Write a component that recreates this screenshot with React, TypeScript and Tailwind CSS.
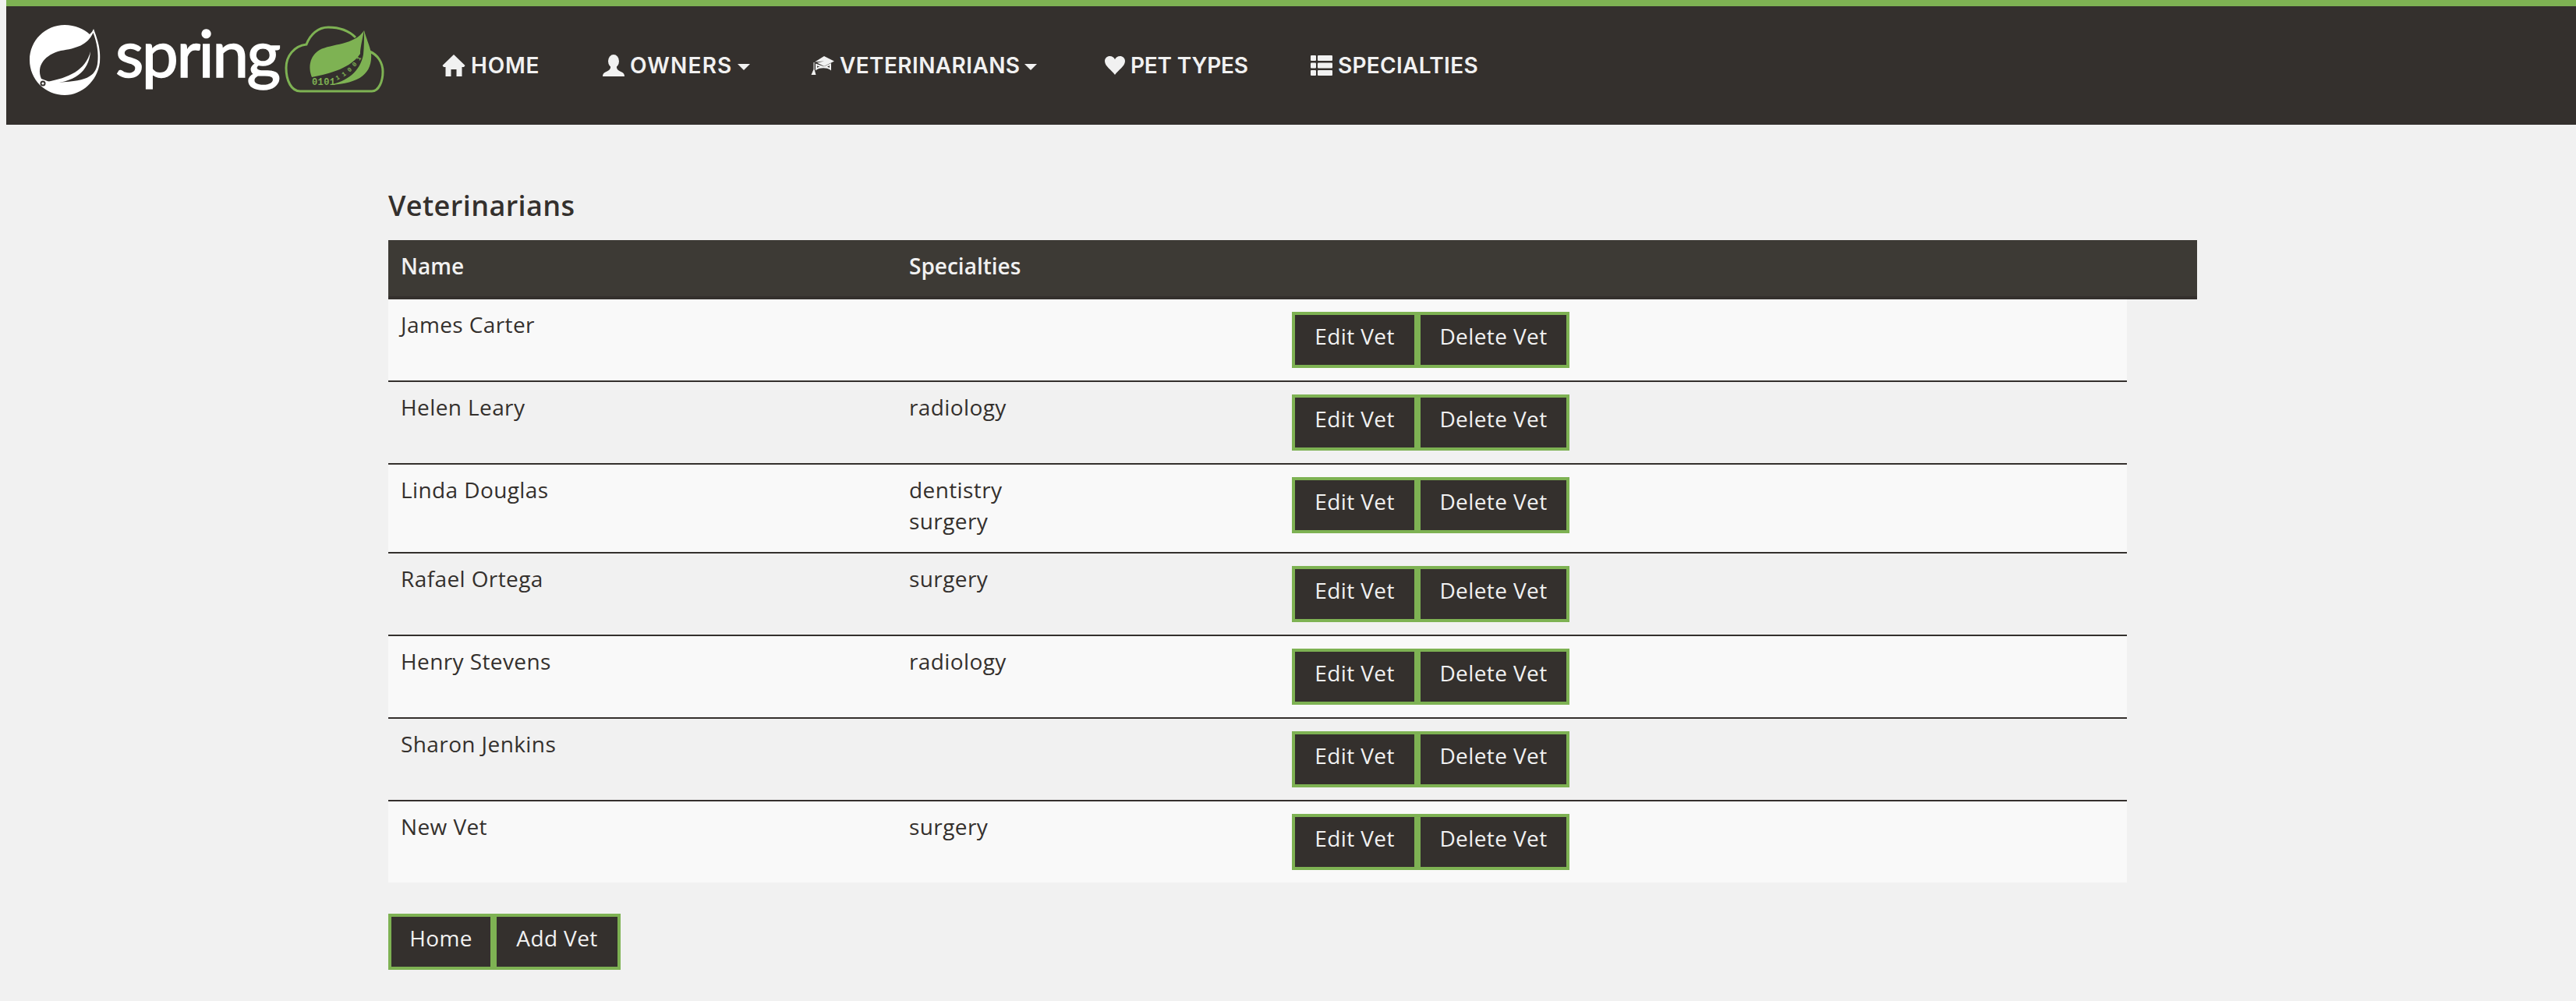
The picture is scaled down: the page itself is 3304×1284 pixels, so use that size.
const BODY = "font-['Open_Sans','Liberation_Sans',sans-serif]";

function HomeIcon() {
  return (
    <svg width="30" height="30" viewBox="0 0 30 30" fill="#f1f1f1">
      <path d="M15 1 L29.5 15 L28 17 H25.5 V29 H18.5 V20 H11.5 V29 H4.5 V17 H2 L0.5 15Z" />
    </svg>
  );
}
function UserIcon() {
  return (
    <svg width="28" height="28" viewBox="0 0 28 28" fill="#f1f1f1">
      <ellipse cx="14" cy="8.5" rx="7" ry="8.5" />
      <path d="M10 15 C10.5 19 8 20.5 3.5 22.5 C1 23.6 0 25.5 0 28 H28 C28 25.5 27 23.6 24.5 22.5 C20 20.5 17.5 19 18 15 Z" />
    </svg>
  );
}
function CapIcon() {
  return (
    <svg width="30" height="24" viewBox="0 0 30 24" fill="#f1f1f1">
      <path d="M17 0 L30 6.5 L17 13 L8 8.5 L17 6.5 L5 7.5Z" />
      <path d="M7 11 V16.5 C11 13.5 21 13.5 25 16.5 V10.5 L17 14.5 Z" fill="none" stroke="#f1f1f1" strokeWidth="2" />
      <path d="M3.5 8 V17 L0.5 24 H6.5 L4.6 17 V8Z" />
    </svg>
  );
}
function HeartIcon() {
  return (
    <svg width="26" height="24" viewBox="0 0 26 24" fill="#f1f1f1">
      <path d="M13 24 C9 18 0 13 0 6.5 C0 2.5 3 0 6.5 0 C9.5 0 12 1.8 13 4.2 C14 1.8 16.5 0 19.5 0 C23 0 26 2.5 26 6.5 C26 13 17 18 13 24Z" />
    </svg>
  );
}
function ListIcon() {
  return (
    <svg width="28" height="26" viewBox="0 0 28 26" fill="#f1f1f1">
      <rect x="0" y="0" width="7" height="7" rx="1" />
      <rect x="9" y="0" width="19" height="7" rx="1" />
      <rect x="0" y="9.5" width="7" height="7" rx="1" />
      <rect x="9" y="9.5" width="19" height="7" rx="1" />
      <rect x="0" y="19" width="7" height="7" rx="1" />
      <rect x="9" y="19" width="19" height="7" rx="1" />
    </svg>
  );
}

function SpringLeaf() {
  return (
    <svg width="92" height="92" viewBox="38 32 92 92" className="shrink-0">
      <path d="M120 37 C123 45 130 62 128 80 C125 104 105 122 83 122 C58 122 38 102 38 77 C38 52 58 32 83 32 C96 32 108 37 115 44 C117 42 119 40 120 37Z" fill="#fff" />
      <path d="M119.5 42 C124 54 127 68 125 82 C122 98 112 105 66 106 L53 101 C46 84 58 70 78 65 C98 62 112 58 119.5 42Z" fill="#34302d" />
      <path d="M60 105 C88 100 110 90 116 66 C114 92 96 106 60 108Z" fill="#fff" />
      <circle cx="55" cy="107" r="3.5" fill="#34302d" />
      <circle cx="55" cy="107" r="1.6" fill="#fff" />
    </svg>
  );
}

function CloudLeaf() {
  return (
    <svg width="128" height="88" viewBox="365 30 128 88" className="shrink-0">
      <path
        d="M385 115 H477 C486 115 491 102 491 90 C491 78 484 68 474 64 M456 46 C446 36 433 33 421 33 C408 33 398 42 393 55 C377 57 367 70 367 85 C367 102 374 115 385 115"
        fill="none"
        stroke="#7eb253"
        strokeWidth="3"
      />
      <path d="M467 37 C464 52 462 60 462 67 C450 85 425 92 400 97 C395 84 397 70 410 62 C425 54 455 56 467 37Z" fill="#7eb253" />
      <path d="M467 37 C470 48 474 56 476 66 C478 92 462 105 423 107 C445 102 462 90 466 68 C467 58 467 47 467 37Z" fill="#7eb253" />
      <path id="leafBand" d="M432 101 C445 95 456 85 463 73" fill="none" />
      <text fill="#7eb253" fontSize="8" fontWeight="700" fontFamily="Liberation Mono, monospace">
        <textPath href="#leafBand">1 1 0 0 1</textPath>
      </text>
      <text x="400" y="107" fill="#7eb253" fontSize="12" fontWeight="700" fontFamily="Liberation Mono, monospace" textLength="30">0 1 0 1</text>
    </svg>
  );
}

function NavItem({
  icon,
  label,
  caret,
  width,
  tracking,
}: {
  icon: React.ReactNode;
  label: string;
  caret?: boolean;
  width: string;
  tracking: string;
}) {
  return (
    <a className={`flex items-center gap-[7px] text-[28px] font-semibold text-[#f1f1f1] uppercase ${width}`}>
      <span className="flex items-center">{icon}</span>
      <span className={tracking}>{label}</span>
      {caret && (
        <span className="ml-[-1px] mt-[3px] h-0 w-0 border-x-8 border-t-8 border-x-transparent border-t-[#f1f1f1]" />
      )}
    </a>
  );
}

function Btn({ label, width }: { label: string; width: string }) {
  return (
    <button
      className={`flex h-[72px] items-center justify-center border-4 border-[#7eb253] bg-[#34302d] pb-[10px] text-[28px] tracking-[0.4px] text-[#f1f1f1] ${width}`}
    >
      {label}
    </button>
  );
}

const vets: { name: string; spec: string[] }[] = [
  { name: "James Carter", spec: [] },
  { name: "Helen Leary", spec: ["radiology"] },
  { name: "Linda Douglas", spec: ["dentistry", "surgery"] },
  { name: "Rafael Ortega", spec: ["surgery"] },
  { name: "Henry Stevens", spec: ["radiology"] },
  { name: "Sharon Jenkins", spec: [] },
  { name: "New Vet", spec: ["surgery"] },
];

export default function App() {
  return (
    <div className={`min-h-[1284px] bg-[#f1f1f1] pl-2 text-[#34302d] ${BODY}`}>
      <nav className="flex h-[160px] items-center border-t-8 border-[#7eb253] bg-[#34302d] font-['Inter',sans-serif]">
        <div className="ml-[30px] flex h-[152px] items-start pt-6">
          <SpringLeaf />
          <span className="ml-[18px] mt-[-15px] w-[218px] shrink-0 font-['Lato',sans-serif] text-[84px] leading-[100px] font-normal tracking-[-2.5px] text-white [-webkit-text-stroke:1.5px_white]">
            spring
          </span>
          <div className="ml-[-1px]">
            <CloudLeaf />
          </div>
        </div>
        <div className="ml-[74px] flex items-center">
          <NavItem width="w-[206px]" tracking="tracking-[0.8px]" icon={<HomeIcon />} label="Home" />
          <NavItem width="w-[267px]" tracking="tracking-[1.2px]" icon={<UserIcon />} label="Owners" caret />
          <NavItem width="w-[377px]" tracking="tracking-[0.4px]" icon={<CapIcon />} label="Veterinarians" caret />
          <NavItem width="w-[264px]" tracking="tracking-[-0.2px]" icon={<HeartIcon />} label="Pet Types" />
          <NavItem width="w-[240px]" tracking="tracking-[0.3px]" icon={<ListIcon />} label="Specialties" />
        </div>
      </nav>

      <main className="ml-[490px] w-[2320px] pt-[84px]">
        <h2 className="h-[64px] text-[36px] leading-[40px] font-semibold tracking-[0.4px]">Veterinarians</h2>
        <div className="grid h-[76px] grid-cols-[652px_491px_1fr] border-b-4 border-[#34302d] bg-[#3d3a35] text-[28px] leading-[40px] font-semibold text-[#f1f1f1]">
          <div className="px-4 pt-[13px]">Name</div>
          <div className="px-4 pt-[13px]">Specialties</div>
          <div />
        </div>
        <div className="mb-10 w-[2230px] text-[28px] leading-[40px] tracking-[0.4px]">
          {vets.map((v, i) => (
            <div
              key={v.name}
              className={`grid grid-cols-[652px_491px_1fr] ${i % 2 === 0 ? "bg-[#f9f9f9]" : "bg-[#f1f1f1]"} ${
                i < vets.length - 1 ? "border-b-2 border-[#34302d]" : ""
              }`}
            >
              <div className="px-4 pt-3 pb-5">{v.name}</div>
              <div className="px-4 pt-3 pb-5">
                {v.spec.map((s) => (
                  <div key={s}>{s}</div>
                ))}
              </div>
              <div className="flex p-4">
                <Btn label="Edit Vet" width="w-[161px]" />
                <Btn label="Delete Vet" width="w-[195px]" />
              </div>
            </div>
          ))}
        </div>
        <div className="flex">
          <Btn label="Home" width="w-[135px]" />
          <Btn label="Add Vet" width="w-[163px]" />
        </div>
      </main>
    </div>
  );
}
